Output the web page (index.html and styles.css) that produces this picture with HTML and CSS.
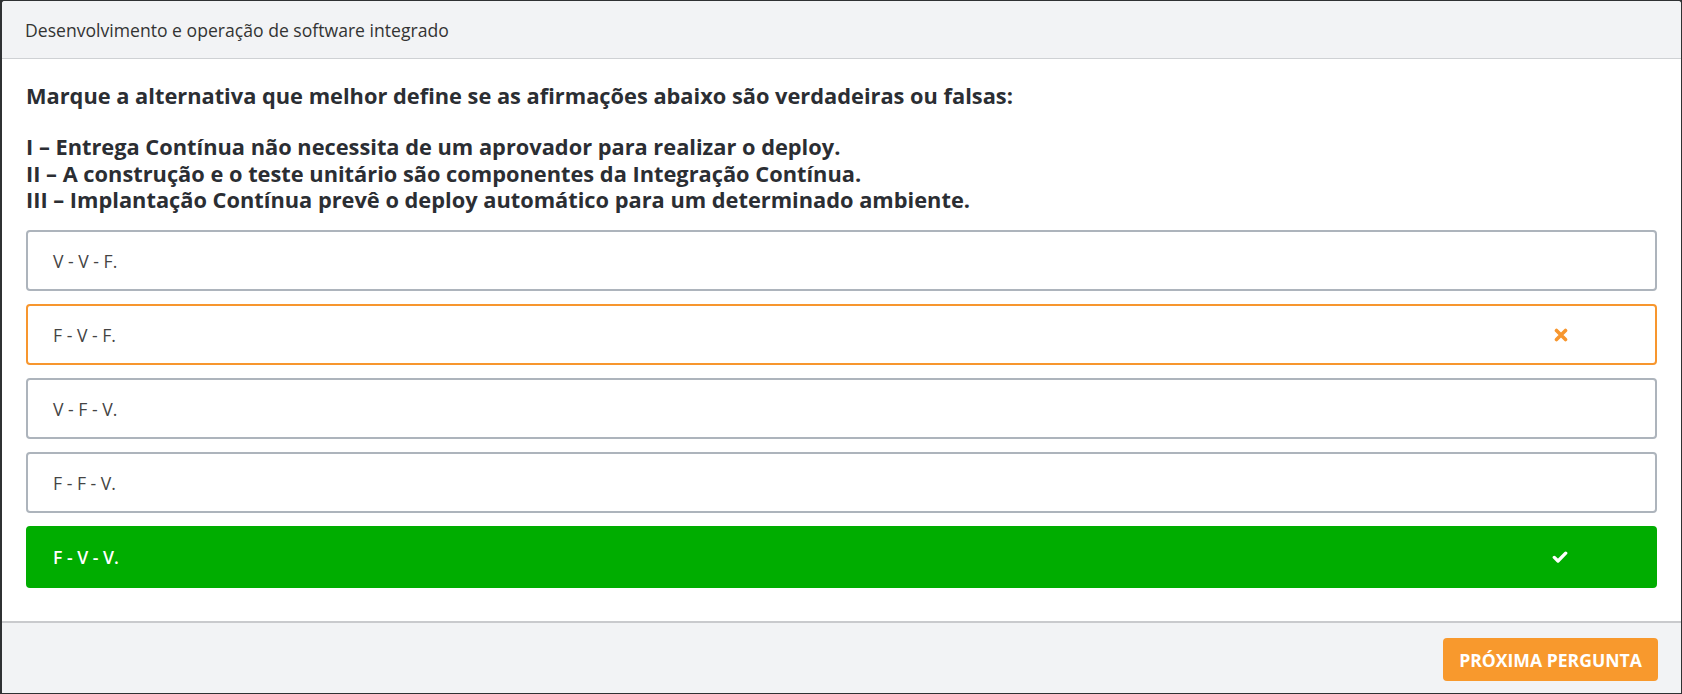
FILE: index.html
```html
<!DOCTYPE html>
<html lang="pt-BR">
<head>
<meta charset="utf-8">
<title>Questão</title>
<link rel="stylesheet" href="styles.css">
</head>
<body>
<div class="modal">
  <div class="modal-header">Desenvolvimento e operação de software integrado</div>
  <div class="modal-body">
    <div class="question">
      <p>Marque a alternativa que melhor define se as afirmações abaixo são verdadeiras ou falsas:</p>
      <p class="gap">I – Entrega Contínua não necessita de um aprovador para realizar o deploy.<br>II – A construção e o teste unitário são componentes da Integração Contínua.<br>III – Implantação Contínua prevê o deploy automático para um determinado ambiente.</p>
    </div>
    <div class="options">
      <div class="option"><span>V - V - F.</span></div>
      <div class="option wrong"><span>F - V - F.</span>
        <svg class="icon" viewBox="0 0 14 14" width="14" height="14"><path d="M2.5 2.5 L11.5 11.5 M11.5 2.5 L2.5 11.5" stroke="#f7962e" stroke-width="3.6" stroke-linecap="round"/></svg>
      </div>
      <div class="option"><span>V - F - V.</span></div>
      <div class="option"><span>F - F - V.</span></div>
      <div class="option right"><span>F - V - V.</span>
        <svg class="icon" viewBox="0 0 16 14" width="16" height="14"><path d="M2.3 7.4 L6 11 L13.7 3.2" fill="none" stroke="#fff" stroke-width="3.3" stroke-linecap="round" stroke-linejoin="round"/></svg>
      </div>
    </div>
  </div>
  <div class="modal-footer">
    <button class="next">PRÓXIMA PERGUNTA</button>
  </div>
</div>
</body>
</html>
```

FILE: styles.css
```css
html, body {
  margin: 0;
  padding: 0;
}
body {
  background: #2f3133;
  width: 1682px;
  height: 694px;
  overflow: hidden;
  font-family: "Open Sans", "Liberation Sans", sans-serif;
  padding: 1px 0 0 2px;
  box-sizing: border-box;
}
.modal {
  width: 1679px;
  background: #fff;
  border-radius: 3px 3px 0 0;
  overflow: hidden;
}
.modal-header {
  background: #f2f3f5;
  height: 57px;
  border-bottom: 1px solid #cfd1d4;
  display: flex;
  align-items: center;
  padding-left: 23px;
  font-size: 17.6px;
  color: #333;
}
.modal-body {
  padding: 24px 24px 33px 24px;
}
.question p {
  margin: 0;
  font-size: 21.8px;
  line-height: 26.3px;
  font-weight: 700;
  color: #2b2e33;
}
.question p.gap {
  margin-top: 25px;
}
.options {
  margin-top: 17px;
  display: flex;
  flex-direction: column;
  gap: 13px;
}
.option {
  height: 61px;
  box-sizing: border-box;
  border: 2px solid #adb4bc;
  border-radius: 4px;
  display: flex;
  align-items: center;
  justify-content: space-between;
  padding: 0 87px 0 25px;
  font-size: 17.6px;
  color: #444;
}
.option.wrong {
  border-color: #f7962e;
}
.option.right {
  height: 62px;
  background: #00ad00;
  border-color: #00ad00;
  color: #fff;
  font-weight: 600;
}
.icon {
  display: block;
}
.modal-footer {
  background: #f2f3f5;
  border-top: 2px solid #c9cacd;
  height: 72px;
  display: flex;
  justify-content: flex-end;
  align-items: flex-start;
  padding: 15px 23px 0 0;
  box-sizing: border-box;
}
.next {
  background: #f8992d;
  color: #fff;
  border: none;
  border-radius: 4px;
  height: 43px;
  width: 215px;
  font-family: "Open Sans", "Liberation Sans", sans-serif;
  font-size: 17.6px;
  font-weight: 700;
  padding: 0;
}
```
